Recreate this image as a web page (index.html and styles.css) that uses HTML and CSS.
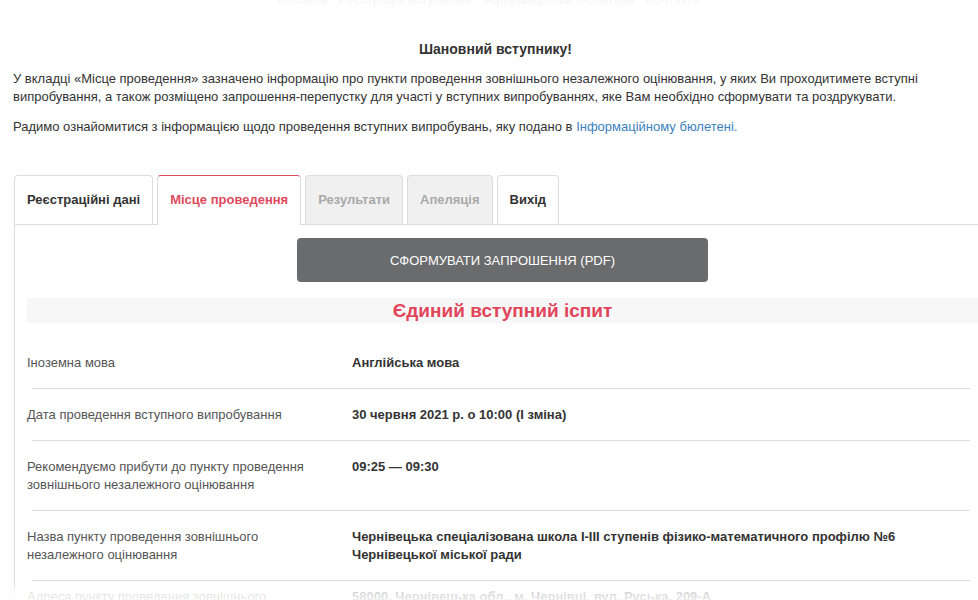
FILE: index.html
```html
<!DOCTYPE html>
<html>
  <head>
    <meta http-equiv="content-type" content="text/html; charset=UTF-8">
    <title>Кабінет вступника</title>
    <link rel="stylesheet" href="styles.css">
  </head>
  <body>
    <!-- top menu, scrolled mostly out of view -->
    <div class="topnav">Головна &nbsp; Реєстрація вступників &nbsp; Інформаційний бюлетень &nbsp; Контакти</div>

    <div class="page">
      <h2 class="greeting">Шановний вступнику!</h2>
      <p>У вкладці «Місце проведення» зазначено інформацію про пункти проведення зовнішнього незалежного оцінювання, у яких Ви проходитимете вступні випробування, а також розміщено запрошення-перепустку для участі у вступних випробуваннях, яке Вам необхідно сформувати та роздрукувати.</p>
      <p>Радимо ознайомитися з інформацією щодо проведення вступних випробувань, яку подано в <a href="#">Інформаційному бюлетені.</a></p>

      <!-- tabs -->
      <ul class="tabs">
        <li class="tab">Реєстраційні дані</li>
        <li class="tab active">Місце проведення</li>
        <li class="tab disabled">Результати</li>
        <li class="tab disabled">Апеляція</li>
        <li class="tab">Вихід</li>
      </ul>

      <div class="tab-content">
        <div class="btn-row"><button class="btn-pdf">СФОРМУВАТИ ЗАПРОШЕННЯ (PDF)</button></div>
        <div class="band">Єдиний вступний іспит</div>

        <div class="row first">
          <div class="label">Іноземна мова</div>
          <div class="value">Англійська мова</div>
        </div>
        <div class="sep"></div>
        <div class="row">
          <div class="label">Дата проведення вступного випробування</div>
          <div class="value">30 червня 2021 р. о 10:00 (I зміна)</div>
        </div>
        <div class="sep"></div>
        <div class="row">
          <div class="label">Рекомендуємо прибути до пункту проведення зовнішнього незалежного оцінювання</div>
          <div class="value">09:25 — 09:30</div>
        </div>
        <div class="sep"></div>
        <div class="row">
          <div class="label">Назва пункту проведення зовнішнього незалежного оцінювання</div>
          <div class="value">Чернівецька спеціалізована школа I-III ступенів фізико-математичного профілю №6 Чернівецької міської ради</div>
        </div>
        <div class="sep"></div>
        <div class="row last">
          <div class="label">Адреса пункту проведення зовнішнього</div>
          <div class="value">58000, Чернівецька обл., м. Чернівці, вул. Руська, 209-А</div>
        </div>
      </div>
    </div>
    <div class="fade"></div>
  </body>
</html>
```

FILE: styles.css
```css
html {
  overflow-x: hidden;
}
body {
  font-family: "Liberation Sans", Arial, sans-serif;
  font-size: 13px;
  line-height: 18px;
  color: #333;
  margin: 0;
  background-color: #ffffff;
}
.topnav {
  margin-top: -9px;
  height: 18px;
  text-align: center;
  color: #f6f6f6;
  font-size: 13px;
}
.page {
  width: 965px;
  padding-left: 13px;
}
.greeting {
  text-align: center;
  font-size: 14px;
  line-height: 20px;
  margin: 30px 0 11px;
  color: #333;
}
p {
  margin: 0 0 12px;
}
a {
  color: #3c7fc0;
  text-decoration: none;
}
.tabs {
  list-style: none;
  margin: 39px 0 0 1px;
  padding: 0;
  display: flex;
  gap: 4px;
}
.tab {
  font-weight: bold;
  padding: 15px 12px;
  border: 1px solid #ddd;
  border-bottom: none;
  border-radius: 4px 4px 0 0;
  background-color: #fff;
  color: #333;
}
.tab.active {
  color: #e04a5c;
  border-top-color: #e04a5c;
  margin-bottom: -1px;
  padding-bottom: 16px;
}
.tab.disabled {
  background-color: #f0f0f0;
  color: #aaa;
}
.tab-content {
  margin-left: 1px;
  border-left: 1px solid #ddd;
  border-top: 1px solid #ddd;
  padding: 13px 0 20px 12px;
}
.btn-row {
  text-align: center;
}
.btn-pdf {
  width: 411px;
  height: 44px;
  background-color: #6a6b6d;
  color: #fff;
  border: none;
  border-radius: 4px;
  font-family: "Liberation Sans", Arial, sans-serif;
  font-size: 13px;
}
.band {
  margin-top: 16px;
  background-color: #f7f7f7;
  text-align: center;
  color: #e0455a;
  font-weight: bold;
  font-size: 19px;
  line-height: 25px;
}
.row {
  display: grid;
  grid-template-columns: 325px 1fr;
  padding: 17px 0 16px;
}
.row.first {
  margin-top: 14px;
}
.label {
  color: #555;
  padding-right: 20px;
}
.value {
  font-weight: bold;
  color: #333;
  padding-right: 30px;
}
.sep {
  height: 1px;
  background-color: #ddd;
  margin: 0 8px 0 5px;
}
.row.last {
  padding-top: 7px;
}
.fade {
  position: fixed;
  left: 0;
  right: 0;
  bottom: 0;
  height: 14px;
  background: linear-gradient(rgba(255,255,255,0.7), rgba(255,255,255,0.9));
  pointer-events: none;
}
```
